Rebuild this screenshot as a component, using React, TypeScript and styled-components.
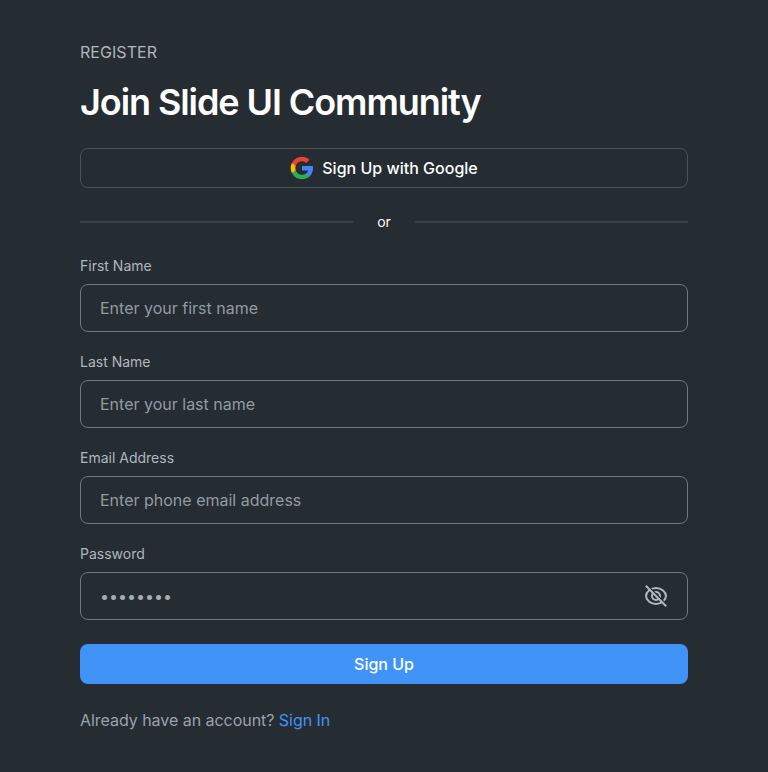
import React from "react";
import styled, { createGlobalStyle } from "styled-components";

const GlobalStyle = createGlobalStyle`
  * { box-sizing: border-box; }
  body { margin: 0; background: #252c32; font-family: Inter, sans-serif; }
`;
const Page = styled.main`
  min-height: 772px;
  padding: 40px 80px;
  background: #252c32;
  color: #fff;
`;
const Overline = styled.p`
  margin: 0;
  font-size: 16px;
  line-height: 24px;
  letter-spacing: 0.05px;
  color: #b0b7be;
`;
const Title = styled.h1`
  margin: 14px 0 22px;
  font-size: 36px;
  line-height: 48px;
  font-weight: 600;
  letter-spacing: -1.08px;
`;
const Button = styled.button<{ $primary?: boolean }>`
  display: flex;
  align-items: center;
  justify-content: center;
  gap: 8px;
  width: 100%;
  height: 40px;
  padding: 0;
  border: ${(p) => (p.$primary ? "none" : "1px solid #48535b")};
  border-radius: 8px;
  background: ${(p) => (p.$primary ? "#4094f7" : "transparent")};
  color: #fff;
  font: 500 16px/24px Inter, sans-serif;
`;
const Divider = styled.div`
  display: flex;
  align-items: center;
  gap: 24px;
  margin: 24px 0;
  font-size: 14px;
  line-height: 20px;
  &::before, &::after { content: ""; flex: 1; height: 2px; background: #394148; }
`;
const Fields = styled.div`
  display: grid;
  gap: 20px;
  margin-bottom: 24px;
`;
const Field = styled.div``;
const Label = styled.label`
  display: block;
  margin-bottom: 8px;
  font-size: 14px;
  line-height: 20px;
  color: #b0b7be;
`;
const InputBox = styled.div`
  display: flex;
  align-items: center;
  height: 48px;
  padding: 0 19px;
  border: 1px solid #6e777f;
  border-radius: 8px;
`;
const Input = styled.input<{ $masked?: boolean }>`
  flex: 1;
  padding: 0;
  border: 0;
  outline: 0;
  background: transparent;
  color: #fff;
  font: 400 16px/24px Inter, sans-serif;
  &::placeholder { color: ${(p) => (p.$masked ? "#a5adb4" : "#929ba2")}; opacity: 1; }
`;
const Footer = styled.p`
  margin: 24px 0 0;
  font-size: 16px;
  line-height: 24px;
  letter-spacing: -0.04px;
  color: #9aa3aa;
`;
const Link = styled.a`
  color: #4094f7;
`;

const GoogleIcon = () => (
  <svg width="24" height="24" viewBox="0 0 24 24">
    <path fill="#4285F4" d="M23 12.250c0-.8-.07-1.550-.2-2.250H12v4.400h6.050a5.200 5.200 0 0 1-2.250 3.400v2.850h3.650C21.580 18.700 23 15.800 23 12.250z" />
    <path fill="#34A853" d="M12 23.300c3.040 0 5.580-1 7.440-2.720L15.800 17.750c-1 .68-2.280 1.080-3.800 1.080-2.920 0-5.400-1.970-6.300-4.630H1.950v2.900A11.250 11.250 0 0 0 12 23.300z" />
    <path fill="#FBBC05" d="M5.700 14.200a6.750 6.750 0 0 1 0-4.280V7.020H1.950a11.250 11.250 0 0 0 0 10.080l3.750-2.900z" />
    <path fill="#EA4335" d="M12 5.300c1.650 0 3.130.57 4.300 1.680l3.220-3.220A11.250 11.250 0 0 0 1.950 7.020L5.700 9.920C6.600 7.260 9.080 5.300 12 5.300z" />
  </svg>
);
const EyeOffIcon = () => (
  <svg width="24" height="24" viewBox="0 0 24 24" fill="none" stroke="#b0b7be" strokeWidth="2">
    <path d="M2 12c0-4 4.500-8 10-8s10 4 10 8-4.500 8-10 8-10-4-10-8z" />
    <circle cx="12" cy="12" r="4" />
    <path d="M12 11.500a1.200 1.200 0 0 0 .8 1" strokeWidth="1.500" />
    <path stroke="#252c32" strokeWidth="1.600" d="M3.500 1.500l19 19" />
    <path d="M1.800 1.800l20.400 20.400" />
  </svg>
);
const FIELDS = [
  ["first", "First Name", "Enter your first name"],
  ["last", "Last Name", "Enter your last name"],
  ["email", "Email Address", "Enter phone email address"],
];

export default function App() {
  return (
    <Page>
      <GlobalStyle />
      <Overline>REGISTER</Overline>
      <Title>Join Slide UI Community</Title>
      <Button><GoogleIcon />Sign Up with Google</Button>
      <Divider>or</Divider>
      <Fields>
        {FIELDS.map(([id, label, hint]) => (
          <Field key={id}>
            <Label htmlFor={id}>{label}</Label>
            <InputBox><Input id={id} placeholder={hint} /></InputBox>
          </Field>
        ))}
        <Field>
          <Label htmlFor="password">Password</Label>
          <InputBox><Input id="password" $masked placeholder="••••••••" /><EyeOffIcon /></InputBox>
        </Field>
      </Fields>
      <Button $primary>Sign Up</Button>
      <Footer>Already have an account? <Link>Sign In</Link></Footer>
    </Page>
  );
}
